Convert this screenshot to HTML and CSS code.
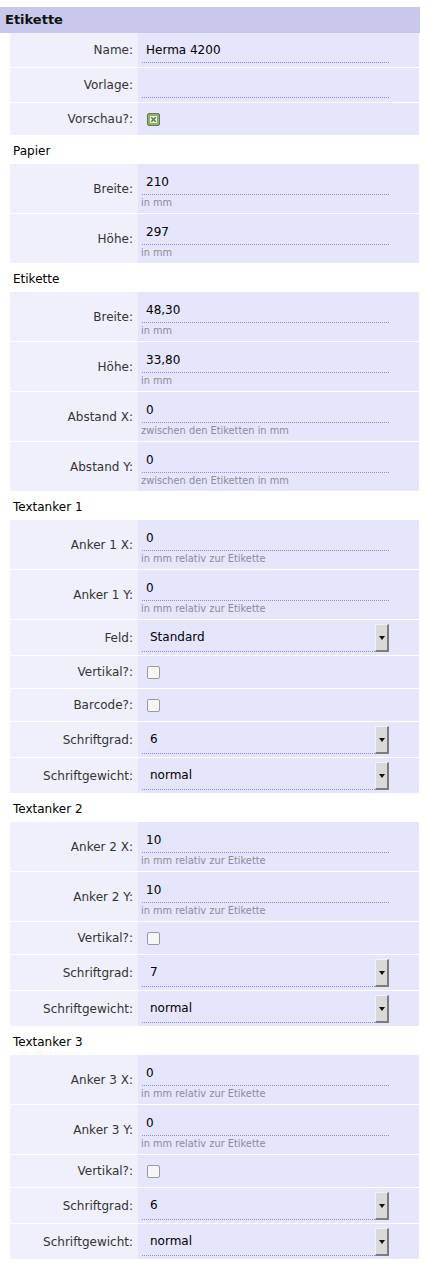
FILE: index.html
```html
<!DOCTYPE html>
<html>
<head>
  <title>Etikette</title>
  <link rel="stylesheet" href="styles.css">
</head>
<body>
  <h1 class="bar">Etikette</h1>
  <form class="sheet">
    <div class="row short">
      <label class="key">Name:</label>
      <div class="val"><input class="field" type="text" value="Herma 4200"></div>
    </div>
    <div class="row short">
      <label class="key">Vorlage:</label>
      <div class="val"><input class="field" type="text" value=""></div>
    </div>
    <div class="row check">
      <label class="key">Vorschau?:</label>
      <div class="val">
        <span class="tick">
          <svg width="13" height="13" viewBox="0 0 13 13">
            <rect x="0.5" y="0.5" width="12" height="12" rx="1.5" fill="#8fae72" stroke="#5d7b46"/>
            <rect x="3" y="3" width="7" height="7" fill="#e8f0dc"/>
            <path d="M4.3 4.3 L8.7 8.7 M8.7 4.3 L4.3 8.7" stroke="#5d7b46" stroke-width="1.6"/>
          </svg>
        </span>
      </div>
    </div>

    <div class="group">Papier</div>
    <div class="row">
      <label class="key">Breite:</label>
      <div class="val"><input class="field" type="text" value="210"><span class="hint">in mm</span></div>
    </div>
    <div class="row">
      <label class="key">Höhe:</label>
      <div class="val"><input class="field" type="text" value="297"><span class="hint">in mm</span></div>
    </div>

    <div class="group">Etikette</div>
    <div class="row">
      <label class="key">Breite:</label>
      <div class="val"><input class="field" type="text" value="48,30"><span class="hint">in mm</span></div>
    </div>
    <div class="row">
      <label class="key">Höhe:</label>
      <div class="val"><input class="field" type="text" value="33,80"><span class="hint">in mm</span></div>
    </div>
    <div class="row">
      <label class="key">Abstand X:</label>
      <div class="val"><input class="field" type="text" value="0"><span class="hint">zwischen den Etiketten in mm</span></div>
    </div>
    <div class="row">
      <label class="key">Abstand Y:</label>
      <div class="val"><input class="field" type="text" value="0"><span class="hint">zwischen den Etiketten in mm</span></div>
    </div>

    <div class="group">Textanker 1</div>
    <div class="row">
      <label class="key">Anker 1 X:</label>
      <div class="val"><input class="field" type="text" value="0"><span class="hint">in mm relativ zur Etikette</span></div>
    </div>
    <div class="row">
      <label class="key">Anker 1 Y:</label>
      <div class="val"><input class="field" type="text" value="0"><span class="hint">in mm relativ zur Etikette</span></div>
    </div>
    <div class="row pick">
      <label class="key">Feld:</label>
      <div class="val">
        <div class="dropdown"><select><option>Standard</option></select><span class="btn"><svg width="6" height="4" viewBox="0 0 6 4"><path d="M0 0 H6 L3 4 Z" fill="#111"/></svg></span></div>
      </div>
    </div>
    <div class="row check">
      <label class="key">Vertikal?:</label>
      <div class="val"><input class="box" type="checkbox"></div>
    </div>
    <div class="row check">
      <label class="key">Barcode?:</label>
      <div class="val"><input class="box" type="checkbox"></div>
    </div>
    <div class="row pick">
      <label class="key">Schriftgrad:</label>
      <div class="val">
        <div class="dropdown"><select><option>6</option></select><span class="btn"><svg width="6" height="4" viewBox="0 0 6 4"><path d="M0 0 H6 L3 4 Z" fill="#111"/></svg></span></div>
      </div>
    </div>
    <div class="row pick">
      <label class="key">Schriftgewicht:</label>
      <div class="val">
        <div class="dropdown"><select><option>normal</option></select><span class="btn"><svg width="6" height="4" viewBox="0 0 6 4"><path d="M0 0 H6 L3 4 Z" fill="#111"/></svg></span></div>
      </div>
    </div>

    <div class="group">Textanker 2</div>
    <div class="row">
      <label class="key">Anker 2 X:</label>
      <div class="val"><input class="field" type="text" value="10"><span class="hint">in mm relativ zur Etikette</span></div>
    </div>
    <div class="row">
      <label class="key">Anker 2 Y:</label>
      <div class="val"><input class="field" type="text" value="10"><span class="hint">in mm relativ zur Etikette</span></div>
    </div>
    <div class="row check">
      <label class="key">Vertikal?:</label>
      <div class="val"><input class="box" type="checkbox"></div>
    </div>
    <div class="row pick">
      <label class="key">Schriftgrad:</label>
      <div class="val">
        <div class="dropdown"><select><option>7</option></select><span class="btn"><svg width="6" height="4" viewBox="0 0 6 4"><path d="M0 0 H6 L3 4 Z" fill="#111"/></svg></span></div>
      </div>
    </div>
    <div class="row pick">
      <label class="key">Schriftgewicht:</label>
      <div class="val">
        <div class="dropdown"><select><option>normal</option></select><span class="btn"><svg width="6" height="4" viewBox="0 0 6 4"><path d="M0 0 H6 L3 4 Z" fill="#111"/></svg></span></div>
      </div>
    </div>

    <div class="group">Textanker 3</div>
    <div class="row">
      <label class="key">Anker 3 X:</label>
      <div class="val"><input class="field" type="text" value="0"><span class="hint">in mm relativ zur Etikette</span></div>
    </div>
    <div class="row">
      <label class="key">Anker 3 Y:</label>
      <div class="val"><input class="field" type="text" value="0"><span class="hint">in mm relativ zur Etikette</span></div>
    </div>
    <div class="row check">
      <label class="key">Vertikal?:</label>
      <div class="val"><input class="box" type="checkbox"></div>
    </div>
    <div class="row pick">
      <label class="key">Schriftgrad:</label>
      <div class="val">
        <div class="dropdown"><select><option>6</option></select><span class="btn"><svg width="6" height="4" viewBox="0 0 6 4"><path d="M0 0 H6 L3 4 Z" fill="#111"/></svg></span></div>
      </div>
    </div>
    <div class="row pick">
      <label class="key">Schriftgewicht:</label>
      <div class="val">
        <div class="dropdown"><select><option>normal</option></select><span class="btn"><svg width="6" height="4" viewBox="0 0 6 4"><path d="M0 0 H6 L3 4 Z" fill="#111"/></svg></span></div>
      </div>
    </div>
  </form>
</body>
</html>
```

FILE: styles.css
```css
body {
  margin: 0;
  padding-top: 7px;
  background-color: #ffffff;
  font-family: "DejaVu Sans", Verdana, sans-serif;
  font-size: 12px;
  color: #000000;
}

.bar {
  width: 415px;
  height: 26px;
  margin: 0;
  padding-left: 5px;
  background-color: #c8c8ec;
  font-size: 13px;
  font-weight: bold;
  line-height: 25px;
  color: #111111;
}

.sheet {
  width: 409px;
  margin-left: 10px;
  display: flex;
  flex-direction: column;
  gap: 1px;
}

.row {
  display: grid;
  grid-template-columns: 128px 1fr;
  min-height: 49px;
}

.row.short {
  min-height: 34px;
}

.row.check {
  min-height: 32px;
}

.row.pick {
  min-height: 35px;
}

.key {
  background-color: #f0f0fc;
  padding-right: 5px;
  display: flex;
  align-items: center;
  justify-content: flex-end;
  color: #333333;
}

.val {
  background-color: #e5e5fc;
  padding: 7px 0 0 4px;
  display: flex;
  flex-direction: column;
  align-items: flex-start;
}

.row.short .val {
  padding-top: 6px;
}

.row.check .val {
  padding-top: 0;
  justify-content: center;
}

.row.pick .val {
  padding-top: 4px;
}

.field {
  width: 247px;
  height: 24px;
  box-sizing: border-box;
  margin: 0;
  padding: 0 4px 2px 4px;
  border: none;
  border-bottom: 1px dotted #8a8aee;
  background: transparent;
  font-family: "DejaVu Sans", Verdana, sans-serif;
  font-size: 12px;
  color: #000000;
  outline: none;
}

.hint {
  font-size: 9.8px;
  color: #8c8c98;
  line-height: 14px;
  padding-top: 1px;
  margin-left: -1px;
}

.box {
  appearance: none;
  -webkit-appearance: none;
  width: 13px;
  height: 13px;
  margin: 0 0 0 5px;
  border: 1px solid #9a9a9a;
  border-radius: 2px;
  background-color: #f6f6f6;
}

.tick {
  display: flex;
  margin-left: 5px;
}

.dropdown {
  width: 247px;
  height: 28px;
  display: flex;
  border-bottom: 1px dotted #8a8aee;
  box-sizing: border-box;
}

.dropdown select {
  flex: 1;
  appearance: none;
  -webkit-appearance: none;
  border: none;
  background: transparent;
  padding: 0 0 0 8px;
  margin: 0;
  height: 26px;
  font-family: "DejaVu Sans", Verdana, sans-serif;
  font-size: 12px;
  color: #000000;
  outline: none;
}

.btn {
  width: 14px;
  height: 28px;
  background-color: #d9d9d9;
  border-top: 1px solid #f2f2f2;
  border-left: 1px solid #f2f2f2;
  border-right: 2px solid #7c7c7c;
  border-bottom: 2px solid #7c7c7c;
  box-sizing: border-box;
  display: flex;
  align-items: center;
  justify-content: center;
}

.group {
  height: 27px;
  padding-left: 3px;
  padding-top: 7px;
  box-sizing: border-box;
  background-color: #ffffff;
  font-size: 12px;
  line-height: 16px;
}
```
